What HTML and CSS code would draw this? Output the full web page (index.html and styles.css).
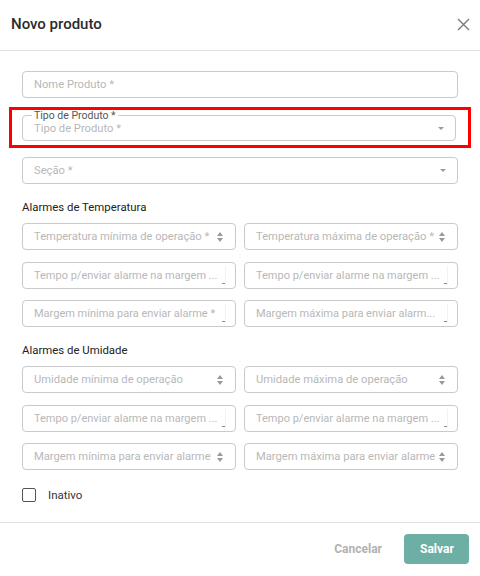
FILE: index.html
```html
<!DOCTYPE html>
<html lang="pt-BR">
<head>
<meta charset="utf-8">
<title>Novo produto</title>
<link rel="stylesheet" href="styles.css">
</head>
<body>
<div class="dialog">
  <header class="header">
    <h1 class="title">Novo produto</h1>
    <button class="close" aria-label="Fechar">
      <svg width="13" height="13" viewBox="0 0 13 13"><path d="M1 1L12 12M12 1L1 12" stroke="#777" stroke-width="1.3" fill="none"/></svg>
    </button>
  </header>
  <main class="content">
    <div class="field"><span class="ph">Nome Produto *</span></div>
    <div class="highlight">
      <div class="field outlined">
        <span class="legend">Tipo de Produto *</span>
        <span class="ph">Tipo de Produto *</span>
        <span class="caret"></span>
      </div>
    </div>
    <div class="field"><span class="ph">Seção *</span><span class="caret"></span></div>

    <h2 class="section">Alarmes de Temperatura</h2>
    <div class="grid">
      <div class="field"><span class="ph">Temperatura mínima de operação *</span><span class="spin"></span></div>
      <div class="field"><span class="ph">Temperatura máxima de operação *</span><span class="spin"></span></div>
      <div class="field tight"><span class="ph">Tempo p/enviar alarme na margem ...</span><span class="spin clipped"></span></div>
      <div class="field tight"><span class="ph">Tempo p/enviar alarme na margem ...</span><span class="spin clipped"></span></div>
      <div class="field tight"><span class="ph">Margem mínima para enviar alarme *</span><span class="spin clipped"></span></div>
      <div class="field tight"><span class="ph">Margem máxima para enviar alarm...</span><span class="spin clipped"></span></div>
    </div>

    <h2 class="section">Alarmes de Umidade</h2>
    <div class="grid">
      <div class="field"><span class="ph">Umidade mínima de operação</span><span class="spin"></span></div>
      <div class="field"><span class="ph">Umidade máxima de operação</span><span class="spin"></span></div>
      <div class="field tight"><span class="ph">Tempo p/enviar alarme na margem ...</span><span class="spin clipped"></span></div>
      <div class="field tight"><span class="ph">Tempo p/enviar alarme na margem ...</span><span class="spin clipped"></span></div>
      <div class="field"><span class="ph">Margem mínima para enviar alarme</span><span class="spin"></span></div>
      <div class="field"><span class="ph">Margem máxima para enviar alarme</span><span class="spin"></span></div>
    </div>

    <label class="check"><span class="box"></span><span>Inativo</span></label>
  </main>
  <footer class="footer">
    <button class="btn cancel">Cancelar</button>
    <button class="btn save">Salvar</button>
  </footer>
</div>
</body>
</html>
```

FILE: styles.css
```css
* { box-sizing: border-box; }
html, body { margin: 0; padding: 0; }
body {
  width: 480px;
  height: 576px;
  background: #fff;
  font-family: Roboto, "Liberation Sans", Arial, sans-serif;
  color: #333;
  overflow: hidden;
}
.dialog {
  width: 480px;
  height: 576px;
  display: flex;
  flex-direction: column;
}
.header {
  height: 51px;
  border-bottom: 1px solid #e2e2e2;
  display: flex;
  align-items: center;
  justify-content: space-between;
  padding: 0 10px 2px 11px;
  flex: none;
}
.title {
  margin: 0;
  font-size: 15px;
  font-weight: 500;
  color: #2b2b2b;
}
.close {
  border: 0;
  background: none;
  padding: 0;
  width: 13px;
  height: 13px;
  display: flex;
}
.content {
  padding: 20px 22px 0 22px;
  display: flex;
  flex-direction: column;
  flex: 1;
}
.field {
  position: relative;
  height: 27px;
  border: 1px solid #cacaca;
  border-radius: 4px;
  display: flex;
  align-items: center;
  padding: 0 11px;
  background: #fff;
  min-width: 0;
}
.ph {
  font-size: 11.2px;
  color: #b8b8b8;
  white-space: nowrap;
  flex: 1;
  min-width: 0;
}
.highlight {
  margin: 9px -13px 9px -13px;
  border: 3px solid #ff0000;
  padding: 5px 12px 4px 10px;
}
.outlined { height: 26px; }
.legend {
  position: absolute;
  top: -6px;
  left: 9px;
  padding: 0 2px;
  background: #fff;
  font-size: 10.5px;
  line-height: 11px;
  color: #555;
}
.outlined .ph { padding-top: 1px; }
.caret {
  width: 0;
  height: 0;
  border-left: 3.5px solid transparent;
  border-right: 3.5px solid transparent;
  border-top: 3.5px solid #9a9a9a;
  flex: none;
}
.section {
  margin: 15px 0 8px 0;
  font-size: 11.4px;
  line-height: 16px;
  font-weight: 400;
  color: #222;
}
.grid {
  display: grid;
  grid-template-columns: minmax(0, 1fr) minmax(0, 1fr);
  column-gap: 8px;
  row-gap: 11.5px;
}
.grid .field { padding: 0 11px 0 11px; }
.grid .field.tight { padding: 0 9px 0 11px; }
.tight .ph { font-size: 11px; }
.spin {
  position: relative;
  width: 7px;
  height: 14px;
  flex: none;
  margin-left: 4px;
}
.spin::before, .spin::after {
  content: "";
  position: absolute;
  left: 0;
  border-left: 3.5px solid transparent;
  border-right: 3.5px solid transparent;
}
.spin::before { top: 2px; border-bottom: 4px solid #9a9a9a; }
.spin::after { bottom: 2px; border-top: 4px solid #9a9a9a; }
.spin.clipped {
  width: 5px;
  height: 19px;
  border-right: 1px solid #f2f2f2;
  margin-left: 0;
}
.spin.clipped::before { display: none; }
.spin.clipped::after {
  border: 0;
  width: 3px;
  height: 1px;
  background: #8a8a8a;
  left: 1px;
  bottom: 1px;
}
.check {
  display: flex;
  align-items: center;
  gap: 12px;
  margin-top: 18px;
  font-size: 11.5px;
  color: #333;
}
.box {
  width: 14px;
  height: 14px;
  border: 1px solid #555;
  border-radius: 2px;
}
.footer {
  flex: none;
  height: 54px;
  border-top: 1px solid #e2e2e2;
  display: flex;
  justify-content: flex-end;
  align-items: flex-start;
  padding: 11px 11px 0 0;
  gap: 8px;
}
.btn {
  font-family: Roboto, "Liberation Sans", Arial, sans-serif;
  font-size: 12px;
  font-weight: 700;
  height: 30px;
  border: 0;
  border-radius: 4px;
  padding: 0 16px;
  background: none;
}
.cancel { color: #b2b2b2; padding: 0 14px; }
.save {
  background: #6dafa5;
  color: #fff;
  width: 65px;
}
```
